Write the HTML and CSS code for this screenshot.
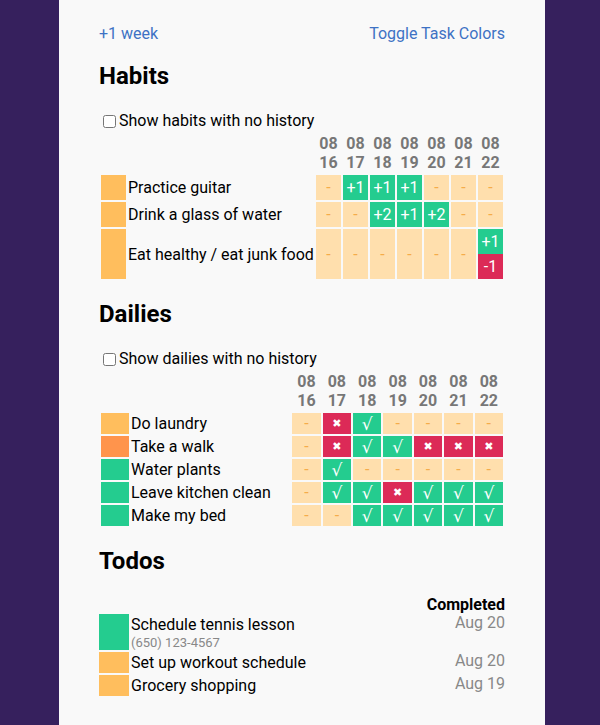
FILE: index.html
```html
<!DOCTYPE html>
<html lang="en">
<head>
    <meta charset="UTF-8">
    <meta name="viewport" content="width=device-width, initial-scale=1.0">
    <title>Task History</title>
    <link rel="stylesheet" href="styles.css">
</head>
<body>

    <div class="page">
        <div class="nav">
            <a href="#">+1 week</a>
            <a href="#">Toggle Task Colors</a>
        </div>

        <!-- Habits -->
        <h2>Habits</h2>
        <label class="toggle"><input type="checkbox">Show habits with no history</label>
        <table class="grid habits">
            <thead>
                <tr>
                    <th></th><th></th>
                    <th class="date">08<br>16</th>
                    <th class="date">08<br>17</th>
                    <th class="date">08<br>18</th>
                    <th class="date">08<br>19</th>
                    <th class="date">08<br>20</th>
                    <th class="date">08<br>21</th>
                    <th class="date">08<br>22</th>
                </tr>
            </thead>
            <tbody>
                <tr>
                    <td class="swatch yellow"></td>
                    <td class="name">Practice guitar</td>
                    <td class="day">-</td>
                    <td class="day up">+1</td>
                    <td class="day up">+1</td>
                    <td class="day up">+1</td>
                    <td class="day">-</td>
                    <td class="day">-</td>
                    <td class="day">-</td>
                </tr>
                <tr>
                    <td class="swatch yellow"></td>
                    <td class="name">Drink a glass of water</td>
                    <td class="day">-</td>
                    <td class="day">-</td>
                    <td class="day up">+2</td>
                    <td class="day up">+1</td>
                    <td class="day up">+2</td>
                    <td class="day">-</td>
                    <td class="day">-</td>
                </tr>
                <tr>
                    <td class="swatch yellow"></td>
                    <td class="name">Eat healthy / eat junk food</td>
                    <td class="day">-</td>
                    <td class="day">-</td>
                    <td class="day">-</td>
                    <td class="day">-</td>
                    <td class="day">-</td>
                    <td class="day">-</td>
                    <td class="day split">
                        <div class="up">+1</div>
                        <div class="down">-1</div>
                    </td>
                </tr>
            </tbody>
        </table>

        <!-- Dailies -->
        <h2>Dailies</h2>
        <label class="toggle"><input type="checkbox">Show dailies with no history</label>
        <table class="grid dailies">
            <thead>
                <tr>
                    <th></th><th></th>
                    <th class="date">08<br>16</th>
                    <th class="date">08<br>17</th>
                    <th class="date">08<br>18</th>
                    <th class="date">08<br>19</th>
                    <th class="date">08<br>20</th>
                    <th class="date">08<br>21</th>
                    <th class="date">08<br>22</th>
                </tr>
            </thead>
            <tbody>
                <tr>
                    <td class="swatch yellow"></td>
                    <td class="name">Do laundry</td>
                    <td class="day">-</td>
                    <td class="day miss">&#x2716;</td>
                    <td class="day done">&#x221A;</td>
                    <td class="day">-</td>
                    <td class="day">-</td>
                    <td class="day">-</td>
                    <td class="day">-</td>
                </tr>
                <tr>
                    <td class="swatch orange"></td>
                    <td class="name">Take a walk</td>
                    <td class="day">-</td>
                    <td class="day miss">&#x2716;</td>
                    <td class="day done">&#x221A;</td>
                    <td class="day done">&#x221A;</td>
                    <td class="day miss">&#x2716;</td>
                    <td class="day miss">&#x2716;</td>
                    <td class="day miss">&#x2716;</td>
                </tr>
                <tr>
                    <td class="swatch green"></td>
                    <td class="name">Water plants</td>
                    <td class="day">-</td>
                    <td class="day done">&#x221A;</td>
                    <td class="day">-</td>
                    <td class="day">-</td>
                    <td class="day">-</td>
                    <td class="day">-</td>
                    <td class="day">-</td>
                </tr>
                <tr>
                    <td class="swatch green"></td>
                    <td class="name">Leave kitchen clean</td>
                    <td class="day">-</td>
                    <td class="day done">&#x221A;</td>
                    <td class="day done">&#x221A;</td>
                    <td class="day miss">&#x2716;</td>
                    <td class="day done">&#x221A;</td>
                    <td class="day done">&#x221A;</td>
                    <td class="day done">&#x221A;</td>
                </tr>
                <tr>
                    <td class="swatch green"></td>
                    <td class="name">Make my bed</td>
                    <td class="day">-</td>
                    <td class="day">-</td>
                    <td class="day done">&#x221A;</td>
                    <td class="day done">&#x221A;</td>
                    <td class="day done">&#x221A;</td>
                    <td class="day done">&#x221A;</td>
                    <td class="day done">&#x221A;</td>
                </tr>
            </tbody>
        </table>

        <!-- Todos -->
        <h2 class="todos-title">Todos</h2>
        <table class="todos">
            <thead>
                <tr>
                    <th></th><th></th>
                    <th class="completed">Completed</th>
                </tr>
            </thead>
            <tbody>
                <tr>
                    <td class="swatch green"></td>
                    <td class="name">
                        Schedule tennis lesson
                        <div class="note">(650) 123-4567</div>
                    </td>
                    <td class="when">Aug 20</td>
                </tr>
                <tr>
                    <td class="swatch yellow"></td>
                    <td class="name">Set up workout schedule</td>
                    <td class="when">Aug 20</td>
                </tr>
                <tr>
                    <td class="swatch yellow"></td>
                    <td class="name">Grocery shopping</td>
                    <td class="when">Aug 19</td>
                </tr>
            </tbody>
        </table>
    </div>

</body>
</html>
```

FILE: styles.css
```css
/* Purple frame around the page column */
body {
    font-family: Roboto, "Liberation Sans", sans-serif;
    font-size: 16px;
    background-color: #36205d;
    color: #000;
    margin: 0;
    padding: 0;
}

/* Light page column */
.page {
    box-sizing: border-box;
    width: 486px;
    min-height: 100vh;
    margin-left: 59px;
    padding: 24px 40px 20px;
    background-color: #f9f9f9;
}

/* Top links */
.nav {
    display: flex;
    justify-content: space-between;
    line-height: 19px;
}

.nav a {
    color: #3e72c4;
    text-decoration: none;
}

/* Section headings */
h2 {
    font-size: 24px;
    line-height: 28px;
    font-weight: bold;
    margin: 19px 0 22px;
}

.todos-title {
    margin-bottom: 20px;
}

/* "Show ... with no history" checkbox */
.toggle {
    display: flex;
    align-items: center;
    height: 18px;
    line-height: 18px;
}

.toggle input {
    margin: 0 3px 0 4px;
    width: 13px;
    height: 13px;
}

/* History grids */
.grid {
    width: 100%;
    margin-top: 1px;
    border-spacing: 2px;
}

.grid th,
.grid td {
    padding: 0;
}

.grid .date {
    padding: 1px 0;
    line-height: 19px;
    color: #777;
    font-weight: bold;
    text-align: center;
    vertical-align: bottom;
}

.name {
    white-space: nowrap;
}

.swatch.yellow { background-color: #ffbe5d; }
.swatch.orange { background-color: #ff944c; }
.swatch.green { background-color: #24cc8f; }

/* Day cells */
.day {
    text-align: center;
    background-color: #ffdfad;
    color: #f5ac4a;
}

.habits .swatch,
.habits .day {
    width: 25px;
    height: 25px;
}

.dailies .swatch {
    width: 28px;
    height: 21px;
}

.dailies .day {
    width: 28.4px;
    height: 21px;
}

.day.up,
.day .up,
.day.done {
    background-color: #24cc8f;
    color: #fff;
}

.day .down,
.day.miss {
    background-color: #dc2a57;
    color: #fff;
}

.day.split {
    vertical-align: top;
}

.day.split div {
    height: 25px;
    line-height: 25px;
}

.day.miss {
    font-family: "DejaVu Sans", sans-serif;
    font-size: 11px;
}

.day.done {
    font-family: "DejaVu Sans", sans-serif;
    font-size: 17px;
}

/* Completed todos */
.todos {
    width: 100%;
    border-spacing: 0 2px;
}

.todos th,
.todos td {
    padding: 0;
}

.todos .completed {
    text-align: right;
    line-height: 15px;
    vertical-align: bottom;
}

.todos .swatch {
    width: 30px;
}

.todos .name {
    padding-left: 2px;
    line-height: 21px;
}

.todos .note {
    font-size: 13px;
    line-height: 15px;
    color: #888;
}

.todos .when {
    text-align: right;
    vertical-align: top;
    line-height: 18px;
    color: #888;
}
```
